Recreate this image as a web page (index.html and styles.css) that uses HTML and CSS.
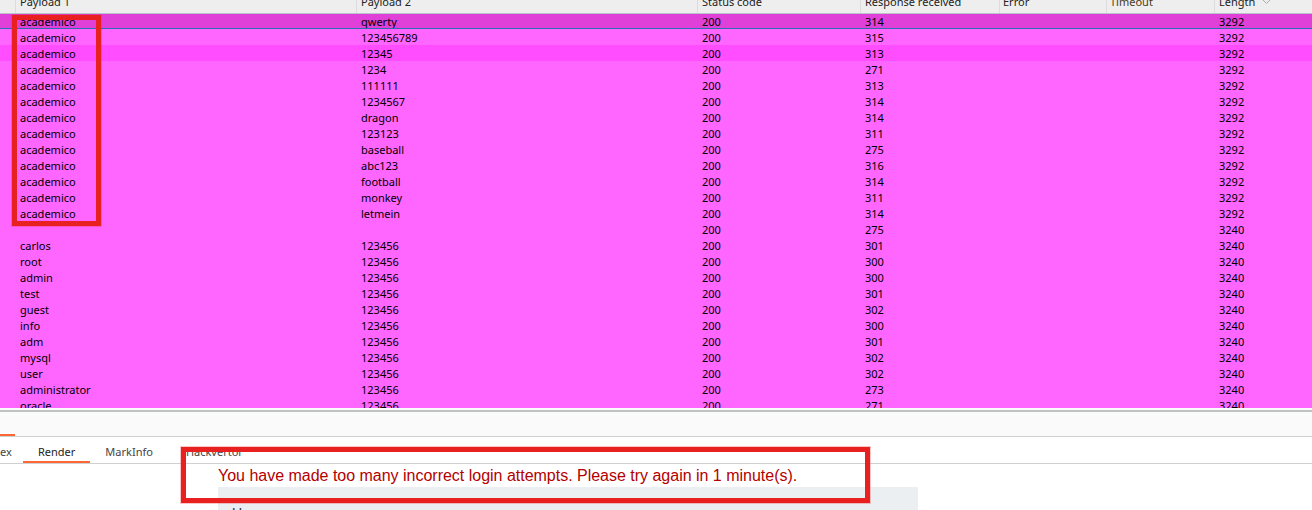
FILE: index.html
```html
<!DOCTYPE html>
<html lang="en">
<head>
<meta charset="utf-8">
<title>Intruder results</title>
<link rel="stylesheet" href="styles.css">
</head>
<body>
<div class="page">
  <div class="results">
    <div class="row head"><span></span><span>Payload 1</span><span>Payload 2</span><span>Status code</span><span>Response received</span><span class="tight">Error</span><span class="timeout tight">Timeout</span><span>Length <svg class="sort" width="9" height="6" viewBox="0 0 9 6"><path d="M1 1l3.500 3.500L8 1" fill="none" stroke="#aaa"/></svg></span></div>
    <div class="row sel"><span></span><span>academico</span><span>qwerty</span><span>200</span><span>314</span><span></span><span></span><span>3292</span></div>
    <div class="row"><span></span><span>academico</span><span>123456789</span><span>200</span><span>315</span><span></span><span></span><span>3292</span></div>
    <div class="row alt"><span></span><span>academico</span><span>12345</span><span>200</span><span>313</span><span></span><span></span><span>3292</span></div>
    <div class="row"><span></span><span>academico</span><span>1234</span><span>200</span><span>271</span><span></span><span></span><span>3292</span></div>
    <div class="row"><span></span><span>academico</span><span>111111</span><span>200</span><span>313</span><span></span><span></span><span>3292</span></div>
    <div class="row"><span></span><span>academico</span><span>1234567</span><span>200</span><span>314</span><span></span><span></span><span>3292</span></div>
    <div class="row"><span></span><span>academico</span><span>dragon</span><span>200</span><span>314</span><span></span><span></span><span>3292</span></div>
    <div class="row"><span></span><span>academico</span><span>123123</span><span>200</span><span>311</span><span></span><span></span><span>3292</span></div>
    <div class="row"><span></span><span>academico</span><span>baseball</span><span>200</span><span>275</span><span></span><span></span><span>3292</span></div>
    <div class="row"><span></span><span>academico</span><span>abc123</span><span>200</span><span>316</span><span></span><span></span><span>3292</span></div>
    <div class="row"><span></span><span>academico</span><span>football</span><span>200</span><span>314</span><span></span><span></span><span>3292</span></div>
    <div class="row"><span></span><span>academico</span><span>monkey</span><span>200</span><span>311</span><span></span><span></span><span>3292</span></div>
    <div class="row"><span></span><span>academico</span><span>letmein</span><span>200</span><span>314</span><span></span><span></span><span>3292</span></div>
    <div class="row"><span></span><span></span><span></span><span>200</span><span>275</span><span></span><span></span><span>3240</span></div>
    <div class="row"><span></span><span>carlos</span><span>123456</span><span>200</span><span>301</span><span></span><span></span><span>3240</span></div>
    <div class="row"><span></span><span>root</span><span>123456</span><span>200</span><span>300</span><span></span><span></span><span>3240</span></div>
    <div class="row"><span></span><span>admin</span><span>123456</span><span>200</span><span>300</span><span></span><span></span><span>3240</span></div>
    <div class="row"><span></span><span>test</span><span>123456</span><span>200</span><span>301</span><span></span><span></span><span>3240</span></div>
    <div class="row"><span></span><span>guest</span><span>123456</span><span>200</span><span>302</span><span></span><span></span><span>3240</span></div>
    <div class="row"><span></span><span>info</span><span>123456</span><span>200</span><span>300</span><span></span><span></span><span>3240</span></div>
    <div class="row"><span></span><span>adm</span><span>123456</span><span>200</span><span>301</span><span></span><span></span><span>3240</span></div>
    <div class="row"><span></span><span>mysql</span><span>123456</span><span>200</span><span>302</span><span></span><span></span><span>3240</span></div>
    <div class="row"><span></span><span>user</span><span>123456</span><span>200</span><span>302</span><span></span><span></span><span>3240</span></div>
    <div class="row"><span></span><span>administrator</span><span>123456</span><span>200</span><span>273</span><span></span><span></span><span>3240</span></div>
    <div class="row"><span></span><span>oracle</span><span>123456</span><span>200</span><span>271</span><span></span><span></span><span>3240</span></div>
  </div>
  <div class="divider"></div>
  <div class="upper-tabs"><span class="upper-active"></span></div>
  <div class="tabs">
    <span class="tab cut">ex</span>
    <span class="tab active">Render</span>
    <span class="tab">MarkInfo</span>
    <span class="tab">Hackvertor</span>
  </div>
  <div class="render">
    <p class="error">You have made too many incorrect login attempts. Please try again in 1 minute(s).</p>
    <div class="panel">Username</div>
  </div>
  <div class="mark mark-names"></div>
  <div class="mark mark-message"></div>
</div>
</body>
</html>
```
FILE: styles.css
```css
html, body {
  margin: 0;
  padding: 0;
}
.page {
  position: relative;
  width: 1312px;
  height: 510px;
  overflow: hidden;
  background: #fff;
  font-family: "Noto Sans", sans-serif;
  font-size: 11px;
  color: #000;
}
.results {
  height: 408px;
  overflow: hidden;
  background: #ff66ff;
}
.divider {
  height: 2px;
  background: #fbfbfb;
  border-bottom: 2px solid #bfc2c2;
}
.row {
  display: grid;
  grid-template-columns: 16px 341px 341px 163px 139px 107px 108px 1fr;
  height: 16px;
  line-height: 17px;
  white-space: nowrap;
}
.row span {
  padding-left: 4px;
  overflow: hidden;
}
.row span:first-child {
  padding: 0;
}
.head {
  height: 14px;
  line-height: 9px;
  background: #eeeeee;
  color: #222;
  border-bottom: 1px solid #b9c4ca;
  box-sizing: border-box;
  align-items: stretch;
}
.head span {
  border-right: 1px solid #dcdcdc;
  margin-top: -3px;
}
.head span:last-child {
  border-right: 0;
}
.row .tight {
  padding-left: 3px;
}
.timeout {
  color: #4a3a20;
}
.sort {
  margin-left: 4px;
  vertical-align: 1px;
}
.sel {
  height: 15px;
  line-height: 15px;
  background: #e040d8;
  border-bottom: 1px solid #2d6cb0;
  box-sizing: border-box;
}
.alt {
  background: #ff4dff;
}
.upper-tabs {
  position: relative;
  height: 24px;
  background: #fafafa;
  border-bottom: 1px solid #cfd2d2;
}
.upper-active {
  display: block;
  position: absolute;
  left: 0;
  bottom: 0;
  width: 15px;
  height: 2px;
  background: #ff6633;
}
.tabs {
  display: flex;
  height: 26px;
  border-bottom: 1px solid #cfd2d2;
  padding-left: 23px;
  position: relative;
}
.tab {
  padding: 0 15px;
  line-height: 30px;
  height: 26px;
  color: #444;
  overflow: hidden;
}
.tab:nth-child(3) {
  margin-right: 3px;
}
.tab.cut {
  position: absolute;
  left: -15px;
  padding: 0 15px;
}
.tab.active {
  color: #222;
  border-bottom: 2px solid #ff6633;
  height: 24px;
}
.render {
  padding-left: 218px;
}
.error {
  margin: 0;
  padding-top: 1px;
  width: 700px;
  font-family: "Liberation Sans", Arial, sans-serif;
  font-size: 16px;
  letter-spacing: -0.012px;
  line-height: 21px;
  color: #b30000;
}
.panel {
  margin-top: 1px;
  width: 700px;
  height: 60px;
  box-sizing: border-box;
  padding: 18px 0 0 14px;
  background: #ebeff2;
  font-family: "Liberation Sans", Arial, sans-serif;
  font-size: 14px;
  color: #333;
}
.mark {
  position: absolute;
  box-sizing: border-box;
  border: 5px solid #e8201f;
  box-shadow: 0 0 0 1px rgba(232, 32, 31, 0.25);
}
.mark-names {
  left: 12px;
  top: 15px;
  width: 89px;
  height: 211px;
}
.mark-message {
  left: 181px;
  top: 447px;
  width: 689px;
  height: 56px;
}
```
